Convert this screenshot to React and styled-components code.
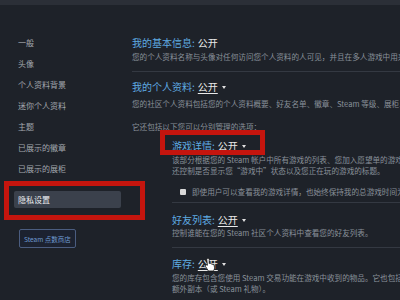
import styled, { createGlobalStyle } from "styled-components";

const GlobalStyle = createGlobalStyle`
  html, body {
    margin: 0;
    padding: 0;
    background: #1e2229;
    overflow: hidden;
  }
  body {
    font-family: "Noto Sans CJK SC", "Noto Sans", "Liberation Sans", sans-serif;
    width: 400px;
    height: 300px;
  }
`;

const Page = styled.div`
  width: 400px;
  height: 300px;
  overflow: hidden;
  position: relative;
  background: #1e2229;
`;

const TopStrip = styled.div`
  height: 5px;
  background: #2b2f37;
`;

const Body = styled.div`
  display: grid;
  grid-template-columns: 132px 1fr;
`;

const Nav = styled.nav`
  display: flex;
  flex-direction: column;
  align-items: flex-start;
  padding: 27px 0 0 14px;
`;

const NavItem = styled.div`
  font-size: 8px;
  line-height: 21px;
  color: #a3a8ae;
  padding-left: 4px;
`;

const SelectedWrap = styled.div`
  position: relative;
  margin-top: 12px;
`;

const Selected = styled.div`
  width: 103px;
  height: 17px;
  line-height: 17px;
  padding-left: 4px;
  font-size: 8px;
  color: #eceff2;
  background: #3b414c;
  border-radius: 2px;
`;

const RedBox = styled.div`
  position: absolute;
  left: ${(p) => p.$left}px;
  top: ${(p) => p.$top}px;
  width: ${(p) => p.$w}px;
  height: ${(p) => p.$h}px;
  box-sizing: border-box;
  border: 5px solid #c4150e;
  pointer-events: none;
`;

const PointsButton = styled.div`
  margin: 21px 0 0 5px;
  height: 19px;
  box-sizing: border-box;
  padding: 0 4px;
  display: flex;
  align-items: center;
  font-size: 6.5px;
  color: #6f9bd1;
  background: #1c2230;
  border: 1px solid #4b5d80;
  border-radius: 2px;
`;

const Content = styled.main`
  padding-top: 31px;
  white-space: nowrap;
  min-width: 0;
`;

const Block = styled.div`
  padding-left: ${(p) => p.$indent || 0}px;
  margin-top: ${(p) => p.$mt || 0}px;
`;

const TitleRow = styled.div`
  position: relative;
  font-size: 10px;
  line-height: 14px;
  color: #5eabe2;
  margin-top: ${(p) => p.$mt || 0}px;
  display: flex;
  align-items: center;
`;

const Value = styled.span`
  color: #eaeaea;
  margin-left: 3px;
  text-decoration: ${(p) => (p.$link ? "underline" : "none")};
  text-underline-offset: 2px;
`;

const Caret = styled.span`
  width: 0;
  height: 0;
  margin-left: 4px;
  border-left: 2.5px solid transparent;
  border-right: 2.5px solid transparent;
  border-top: 3px solid #e0e0e0;
`;

const Desc = styled.div`
  font-size: 7.6px;
  line-height: 11px;
  color: #89919a;
  margin-top: ${(p) => p.$mt || 0}px;
`;

const Divider = styled.div`
  height: 1px;
  background: #343942;
  margin-top: ${(p) => p.$mt || 0}px;
`;

const CheckRow = styled.div`
  display: flex;
  align-items: center;
  gap: 6px;
  margin: ${(p) => p.$mt || 0}px 0 0 8px;
  font-size: 7.6px;
  line-height: 11px;
  color: #89919a;
`;

const Box = styled.span`
  width: 6px;
  height: 6px;
  background: #d8d8d8;
  border-radius: 1px;
  flex: none;
`;

const Cursor = styled.svg`
  position: absolute;
  left: 204px;
  top: 257px;
`;

function Title({ label, value, caret, mt, children }) {
  return (
    <TitleRow $mt={mt}>
      {label}:<Value $link={caret}>{value}</Value>
      {caret && <Caret />}
      {children}
    </TitleRow>
  );
}

const navItems = ["一般", "头像", "个人资料背景", "迷你个人资料", "主题", "已展示的徽章", "已展示的展柜"];

export default function App() {
  return (
    <Page>
      <GlobalStyle />
      <TopStrip />
      <Body>
        <Nav>
          {navItems.map((n) => (
            <NavItem key={n}>{n}</NavItem>
          ))}
          <SelectedWrap>
            <Selected>隐私设置</Selected>
            <RedBox $left={-10} $top={-10} $w={141} $h={39} />
          </SelectedWrap>
          <PointsButton>Steam 点数商店</PointsButton>
        </Nav>

        <Content>
          <Title label="我的基本信息" value="公开" />
          <Desc $mt={1}>您的个人资料名称与头像对任何访问您个人资料的人可见，并且在多人游戏中用来标识您。</Desc>
          <Divider $mt={9} />

          <Title label="我的个人资料" value="公开" caret mt={8} />
          <Desc $mt={4}>您的社区个人资料包括您的个人资料概要、好友名单、徽章、Steam 等级、展柜、评论和群组成员资格。</Desc>
          <Desc $mt={12}>它还包括以下您可以分别管理的选项：</Desc>

          <Block $indent={40}>
            <Title label="游戏详情" value="公开" caret mt={7}>
              <RedBox $left={-12} $top={-9} $w={105} $h={25} />
            </Title>
            <Desc $mt={1}>该部分根据您的 Steam 帐户中所有游戏的列表、您加入愿望单的游戏、您的成就以及游戏时间。</Desc>
            <Desc>还控制是否显示您“游戏中”状态以及您正在玩的游戏的标题。</Desc>
            <CheckRow $mt={10}>
              <Box />
              即使用户可以查看我的游戏详情，也始终保持我的总游戏时间为私密。
            </CheckRow>
            <Divider $mt={5} />

            <Title label="好友列表" value="公开" caret mt={10} />
            <Desc>控制谁能在您的 Steam 社区个人资料中查看您的好友列表。</Desc>
            <Divider $mt={9} />

            <Title label="库存" value="公开" caret mt={9} />
            <Desc $mt={1}>您的库存包含您使用 Steam 交易功能在游戏中收到的物品。它也包括您在 Steam 上购买的任何游戏的</Desc>
            <Desc>额外副本（或 Steam 礼物）。</Desc>
          </Block>
        </Content>
      </Body>

      <Cursor width="13" height="15" viewBox="0 0 13 15">
        <path
          d="M4 1.2c.7 0 1.2.5 1.2 1.2v4.2l.4-.1c.6-.3 1.3 0 1.5.5.5-.3 1.2-.1 1.5.4.5-.2 1.2 0 1.4.6l.5 2.2c.2 1.2-.1 2.4-.8 3.4L9 14H4.4L1.6 9.6c-.4-.6-.2-1.3.4-1.6.5-.3 1.1-.1 1.4.3l-.6-5.9C2.8 1.7 3.3 1.2 4 1.2z"
          fill="#ffffff"
          stroke="#111"
          strokeWidth="0.8"
        />
      </Cursor>
    </Page>
  );
}
